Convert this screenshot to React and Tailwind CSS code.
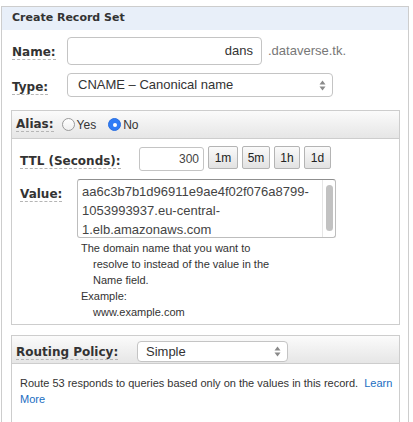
const label = "font-['DejaVu_Sans',Verdana,sans-serif] font-bold text-[12px] text-[#333] border-b border-dashed border-[#b5b5b5] leading-[14px]";

function Arrows() {
  return (
    <svg width="7" height="11" viewBox="0 0 7 11" className="shrink-0">
      <path d="M3.5 0.5 L6.5 4.5 L0.5 4.5 Z" fill="#8a8a8a" />
      <path d="M3.5 10.5 L6.5 6.5 L0.5 6.5 Z" fill="#8a8a8a" />
    </svg>
  );
}

function Radio({ checked }) {
  if (checked) {
    return (
      <span className="w-[13px] h-[13px] rounded-full bg-[#2f7cf6] border border-[#2a6fe0] flex items-center justify-center shrink-0">
        <span className="w-[4px] h-[4px] rounded-full bg-white" />
      </span>
    );
  }
  return (
    <span className="w-[13px] h-[13px] rounded-full bg-gradient-to-b from-white to-[#f0f0f0] border border-[#9a9a9a] shrink-0" />
  );
}

function Btn({ children, w }) {
  return (
    <button
      type="button"
      className={`h-[23px] ${w} rounded-[2px] border border-[#b4b4b4] bg-gradient-to-b from-[#fafafa] to-[#e2e2e2] text-[12px] text-[#222] leading-none`}
    >
      {children}
    </button>
  );
}

export default function App() {
  return (
    <div className="w-[413px] h-[422px] overflow-hidden bg-white font-['Liberation_Sans',Arial,sans-serif] text-[#222]">
      <div className="ml-px mt-[6px] w-[408px] h-[430px] border border-[#cdcdcd]">
        {/* header */}
        <div className="h-[23px] bg-[#e8eff9] pl-[10px] flex items-center">
          <span className="font-['DejaVu_Sans',Verdana,sans-serif] font-bold text-[11px] text-[#333]">
            Create Record Set
          </span>
        </div>

        <div className="pl-[10px] pt-[7px]">
          {/* name */}
          <div className="flex items-center h-[28px]">
            <div className="w-[55px]">
              <span className={label}>Name:</span>
            </div>
            <div className="w-[195px] h-[28px] border border-[#c4c4c4] rounded-[4px] flex items-center justify-end pr-[8px] text-[13px] text-[#333]">
              dans
            </div>
            <span className="ml-[6px] self-start mt-[4px] text-[13px] text-[#777]">.dataverse.tk.</span>
          </div>

          {/* type */}
          <div className="flex items-center h-[24px] mt-[8px]">
            <div className="w-[55px] pt-[1px]">
              <span className={label}>Type:</span>
            </div>
            <div className="w-[266px] h-[24px] border border-[#c4c4c4] rounded-[4px] flex items-center justify-between pl-[10px] pr-[6px] text-[13px] text-[#333]">
              <span>CNAME – Canonical name</span>
              <Arrows />
            </div>
          </div>

          {/* alias box */}
          <div className="mt-[13px] -ml-px w-[389px] border border-[#cdcdcd]">
            <div className="h-[28px] border-b border-[#cdcdcd] bg-gradient-to-b from-[#fbfbfb] to-[#e6e6e6] flex items-center pl-[4px]">
              <span className={label}>Alias:</span>
              <span className="ml-[8px] flex items-center">
                <Radio />
                <span className="ml-[2px] text-[12px] text-[#333]">Yes</span>
              </span>
              <span className="ml-[12px] flex items-center">
                <Radio checked />
                <span className="ml-[2px] text-[12px] text-[#333]">No</span>
              </span>
            </div>

            <div className="pl-[8px] pt-[7px] pb-[4px]">
              {/* ttl */}
              <div className="flex items-center h-[25px]">
                <div className="w-[119px] pt-[3px]">
                  <span className={label}>TTL (Seconds):</span>
                </div>
                <div className="w-[65px] h-[24px] mt-[1px] border border-[#c4c4c4] rounded-[3px] flex items-center justify-end pr-[4px] text-[12px] text-[#444]">
                  300
                </div>
                <div className="ml-[4px] self-start flex gap-[4px]">
                  <Btn w="w-[30px]">1m</Btn>
                  <Btn w="w-[28px]">5m</Btn>
                  <Btn w="w-[26px]">1h</Btn>
                  <Btn w="w-[27px]">1d</Btn>
                </div>
              </div>

              {/* value */}
              <div className="flex mt-[8px]">
                <div className="w-[57px] pt-[2px]">
                  <span className={label}>Value:</span>
                </div>
                <div>
                  <div className="w-[259px] h-[59px] border border-[#bdbdbd] border-t-[#8f8f8f] rounded-[3px] flex">
                    <div className="flex-1 pl-[4px] pt-[2px] text-[13px] leading-[19px] text-[#444]">
                      <div>aa6c3b7b1d96911e9ae4f02f076a8799-</div>
                      <div>1053993937.eu-central-</div>
                      <div>1.elb.amazonaws.com</div>
                    </div>
                    <div className="w-[13px] border-l border-[#e6e6e6] flex justify-center pt-[5px]">
                      <div className="w-[7px] h-[46px] rounded-full bg-[#c2c2c2]" />
                    </div>
                  </div>
                  <div className="mt-[2px] pl-[4px] text-[11px] leading-[16px] text-[#333]">
                    <div>The domain name that you want to</div>
                    <div className="pl-[12px]">resolve to instead of the value in the</div>
                    <div className="pl-[12px]">Name field.</div>
                    <div>Example:</div>
                    <div className="pl-[12px]">www.example.com</div>
                  </div>
                </div>
              </div>
            </div>
          </div>

          {/* routing box */}
          <div className="mt-[10px] -ml-px w-[389px] border border-[#cdcdcd]">
            <div className="h-[28px] border-b border-[#cdcdcd] bg-gradient-to-b from-[#fbfbfb] to-[#e6e6e6] flex items-center pl-[4px] pt-[4px]">
              <div className="w-[121px] -mt-[2px]">
                <span className={label}>Routing Policy:</span>
              </div>
              <div className="w-[151px] h-[21px] border border-[#c4c4c4] rounded-[4px] bg-white flex items-center justify-between pl-[8px] pr-[6px] text-[13px] text-[#333]">
                <span>Simple</span>
                <Arrows />
              </div>
            </div>
            <div className="h-[90px] pl-[8px] pr-[4px] pt-[11px] text-[11px] leading-[16px] text-[#333]">
              Route 53 responds to queries based only on the values in this record.{" "}
              <a href="#" className="ml-[3px] text-[#1a6ec2]">Learn More</a>
            </div>
          </div>
        </div>
      </div>
    </div>
  );
}
